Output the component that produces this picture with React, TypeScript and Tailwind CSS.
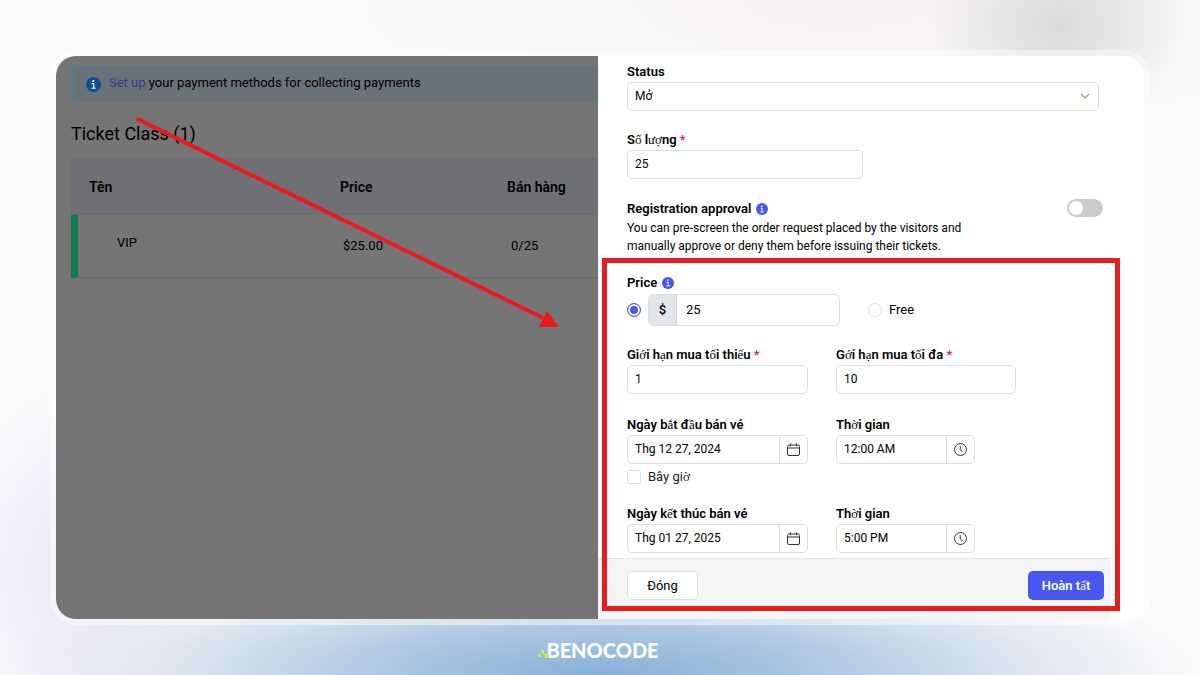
import * as React from "react";

const FALLBACK_GLYPHS = /([ốượớạểắầờếấở]+)/;

function Viet({ children }: { children: string }) {
  return (
    <>
      {children.split(FALLBACK_GLYPHS).map((part, i) =>
        i % 2 === 1 ? (
          <span key={i} className="font-['Liberation_Serif',serif] leading-none font-normal">
            {part}
          </span>
        ) : (
          part
        )
      )}
    </>
  );
}

function InfoIcon({ className }: { className?: string }) {
  return (
    <svg viewBox="0 0 16 16" className={className} aria-hidden="true">
      <circle cx="8" cy="8" r="8" fill="currentColor" />
      <circle cx="7.8" cy="4.2" r="1.1" fill="white" />
      <path d="M6 7h2.2v5M5.8 12h4.6" fill="none" stroke="white" strokeWidth="1.3" />
    </svg>
  );
}

function CalendarIcon() {
  return (
    <svg viewBox="0 0 14 14" className="size-[14px]" fill="none" stroke="#333" aria-hidden="true">
      <rect x="0.500" y="2" width="12" height="10.500" rx="1.5" />
      <path d="M0.500 5h12M3.500 0.300v3M9.500 0.300v3" />
    </svg>
  );
}

function ClockIcon() {
  return (
    <svg viewBox="0 0 14 14" className="size-[14px]" fill="none" stroke="#333" aria-hidden="true">
      <circle cx="6.500" cy="6.500" r="6" />
      <path d="M6.300 3.300V6.700l2.200 2.400" />
    </svg>
  );
}

const LABEL = "block pt-px text-[13px] leading-[21px] font-semibold";
const BOX = "h-[29px] rounded-[5px] border border-[#dcdfe5] bg-white";

interface FieldProps {
  id: string;
  label: string;
  value: string;
  width: string;
  required?: boolean;
  icon?: React.ReactNode;
}

function Field({ id, label, value, width, required, icon }: FieldProps) {
  return (
    <div>
      <label htmlFor={id} className={LABEL}>
        <Viet>{label}</Viet>
        {required && <span className="text-[#d9293f]"> *</span>}
      </label>
      <div className={`flex ${BOX} ${width}`}>
        <input
          id={id}
          defaultValue={value}
          className="min-w-0 flex-1 bg-transparent px-[7px] pb-px text-xs outline-none"
        />
        {icon && (
          <button
            type="button"
            aria-label={`Open picker for ${label}`}
            className="flex w-7 items-center justify-center border-l border-[#dcdfe5]"
          >
            {icon}
          </button>
        )}
      </div>
    </div>
  );
}

function TicketList() {
  return (
    <section className="relative w-[542px] shrink-0 bg-[#757575] pt-[10px] pl-[15px]">
      <div className="flex h-9 items-center gap-2 rounded-l-[5px] border border-r-0 border-l-[3px] border-[#537d95] bg-[#687377] pl-3 text-[13px]">
        <InfoIcon className="size-[15px] text-[#104e94]" />
        <p className="pb-0.5 leading-5">
          <a href="#setup" className="text-[#3a3a96]">Set up</a> your payment methods for collecting payments
        </p>
      </div>
      <h2 className="mt-5 text-lg leading-6">Ticket Class (1)</h2>
      <table className="mt-3 w-full table-fixed border-separate border-spacing-0 text-left text-[13px]">
        <colgroup>
          <col className="w-[251px]" />
          <col className="w-[167px]" />
          <col />
        </colgroup>
        <thead>
          <tr className="h-[57px] bg-[#6f7075] text-sm *:border-y *:border-[#696a6e] *:pl-[18px] *:font-semibold">
            <th>Tên</th>
            <th>Price</th>
            <th>Bán hàng</th>
          </tr>
        </thead>
        <tbody>
          <tr className="h-[63px] *:border-b *:border-b-[#686868]">
            <td className="border-l-[7px] border-l-[#117a50] pb-[6px] pl-[39px]">VIP</td>
            <td className="pl-[21px]">$25.00</td>
            <td className="pl-[22px]">0/25</td>
          </tr>
        </tbody>
      </table>
    </section>
  );
}

function TicketForm() {
  return (
    <form className="relative flex min-w-0 flex-1 flex-col bg-white" onSubmit={(e) => e.preventDefault()}>
      <div className="flex-1 pt-1 pr-[41px] pb-[5px] pl-[29px]">
        <div className="pr-1">
          <label htmlFor="status" className={LABEL}>Status</label>
          <div className="relative">
            <select id="status" className={`block w-full appearance-none px-[7px] pb-px text-xs outline-none ${BOX}`}>
              <option>Mở</option>
            </select>
            <svg viewBox="0 0 10 6" className="pointer-events-none absolute top-[11px] right-[9px] h-[6px] w-[10px]" fill="none" stroke="#8490f5" strokeWidth="1.2" aria-hidden="true">
              <path d="M1 1l4 4 4-4" />
            </svg>
          </div>
        </div>

        <div className="mt-[17px]">
          <Field id="quantity" label="Số lượng" value="25" width="w-[236px]" required />
        </div>

        <div className="mt-5 flex items-start justify-between">
          <div>
            <label htmlFor="approval" className="flex items-center gap-[5px] text-[13px] leading-5 font-semibold">
              Registration approval
              <InfoIcon className="size-3 text-[#4757f2]" />
            </label>
            <p className="max-w-[360px] text-xs leading-[18px]">
              You can pre-screen the order request placed by the visitors and manually approve or deny them before issuing their tickets.
            </p>
          </div>
          <input
            id="approval"
            type="checkbox"
            role="switch"
            className="flex h-[18px] w-9 shrink-0 appearance-none items-center rounded-full bg-[#cbcbcb] px-[2px] before:size-[14px] before:rounded-full before:bg-white checked:justify-end checked:bg-[#4757f2]"
          />
        </div>

        <fieldset className="mt-[17px]">
          <legend className="flex items-center gap-[5px] text-[13px] leading-[22px] font-semibold">
            Price
            <InfoIcon className="size-3 text-[#4757f2]" />
          </legend>
          <div className="flex items-center">
            <input
              type="radio"
              name="price"
              defaultChecked
              aria-label="Paid"
              className="size-[14px] appearance-none rounded-full border border-[#dcdfe5] checked:border-[#4757f2] checked:bg-[#4757f2] checked:shadow-[inset_0_0_0_2px_white]"
            />
            <div className="ml-[7px] flex h-8 w-48 overflow-hidden rounded-[5px] border border-[#dcdfe5]">
              <span className="flex w-7 items-center justify-center border-r border-[#d2d7db] bg-[#e0e6ea] text-[13px] font-medium">$</span>
              <input aria-label="Price amount" defaultValue="25" className="min-w-0 flex-1 px-[9px] text-[13px] outline-none" />
            </div>
            <label className="ml-7 flex items-center gap-[7px] text-[13px]">
              <input
                type="radio"
                name="price"
                className="size-[14px] appearance-none rounded-full border border-[#dcdfe5] checked:border-[#4757f2] checked:bg-[#4757f2] checked:shadow-[inset_0_0_0_2px_white]"
              />
              Free
            </label>
          </div>
        </fieldset>

        <div className="mt-[17px] flex gap-7">
          <Field id="min" label="Giới hạn mua tối thiểu" value="1" width="w-[181px]" required />
          <Field id="max" label="Gới hạn mua tối đa" value="10" width="w-[180px]" required />
        </div>

        <div className="mt-[19px] flex gap-7">
          <Field id="start-date" label="Ngày bắt đầu bán vé" value="Thg 12 27, 2024" width="w-[181px]" icon={<CalendarIcon />} />
          <Field id="start-time" label="Thời gian" value="12:00 AM" width="w-[139px]" icon={<ClockIcon />} />
        </div>
        <label className="mt-1 flex items-center gap-[7px] text-[13px] leading-[18px] text-[#222]">
          <input type="checkbox" className="size-[14px] appearance-none rounded-[2px] border border-[#dcdfe5] checked:bg-[#4757f2]" />
          <span><Viet>Bây giờ</Viet></span>
        </label>

        <div className="mt-4 flex gap-7">
          <Field id="end-date" label="Ngày kết thúc bán vé" value="Thg 01 27, 2025" width="w-[181px]" icon={<CalendarIcon />} />
          <Field id="end-time" label="Thời gian" value="5:00 PM" width="w-[139px]" icon={<ClockIcon />} />
        </div>
      </div>

      <footer className="mr-[33px] flex h-[61px] items-start justify-between border-t border-[#e4e6ea] bg-[#f4f5f7] pt-3 pr-[7px] pl-[29px] text-[13px]">
        <button type="button" className={`w-[71px] ${BOX}`}>Đóng</button>
        <button type="submit" className="h-[29px] w-[76px] rounded-[5px] bg-[#4757f2] font-semibold text-white">
          <Viet>Hoàn tất</Viet>
        </button>
      </footer>

      {/* Highlight around the pricing part of the form */}
      <div className="pointer-events-none absolute top-[202px] right-6 bottom-2 left-1 border-5 border-[#e81c1c]" />
    </form>
  );
}

function Logo() {
  return (
    <div className="flex items-end justify-center text-white">
      <span className="relative pl-[5px] font-['Lato',sans-serif] text-xl leading-6 font-black">
        BENOCODE
        <svg viewBox="0 0 12 9" className="absolute bottom-1 left-[-3px] h-[9px] w-3" fill="#c5ee4f" aria-hidden="true">
          <rect x="0" y="5" width="3" height="3" />
          <rect x="3" y="1" width="3" height="3" />
          <rect x="5" y="4" width="2" height="2" />
          <rect x="7" y="5" width="4" height="4" />
        </svg>
      </span>
    </div>
  );
}

export default function App() {
  return (
    <div className="min-h-screen bg-[#fbfbfc] bg-[radial-gradient(ellipse_130px_110px_at_1060px_25px,#dbd9da,#dbd9da99_45%,transparent),radial-gradient(ellipse_600px_130px_at_50%_100%,#86afd8,#b3cae3_40%,#dbe5eecc_75%,transparent),radial-gradient(ellipse_150px_190px_at_90px_570px,#eae3f8,transparent),radial-gradient(ellipse_500px_150px_at_70%_0,#f6f1f4,transparent)] px-[50px] pt-[50px] font-['Roboto',sans-serif] text-black">
      <div className="rounded-[26px] bg-white/45 p-[6px]">
        <main className="relative flex overflow-hidden rounded-[20px]">
          <TicketList />
          <TicketForm />
          <svg viewBox="0 0 424 212" className="pointer-events-none absolute top-[60px] left-[80px] h-[212px] w-[424px]" aria-hidden="true">
            <path d="M0.500 2.500L407 202" stroke="#e81c1c" strokeWidth="4" />
            <path d="M411 195l12 16h-20z" fill="#e81c1c" />
          </svg>
        </main>
      </div>
      <div className="pt-[13px]">
        <Logo />
      </div>
    </div>
  );
}
